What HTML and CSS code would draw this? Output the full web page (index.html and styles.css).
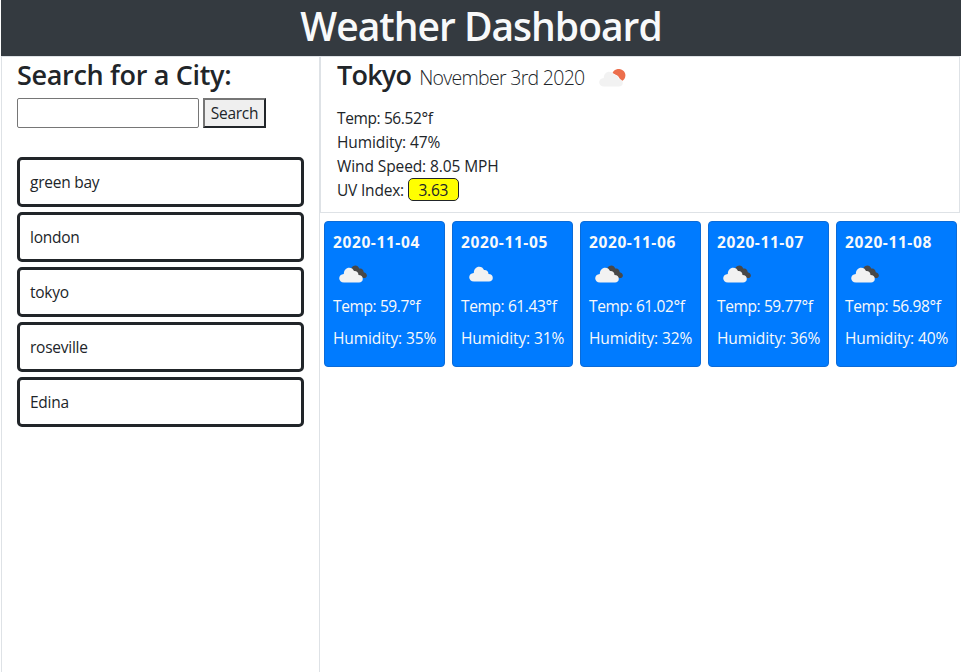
FILE: index.html
```html
<!DOCTYPE html>
<html lang="en">
<head>
<meta charset="utf-8">
<title>Weather Dashboard</title>
<link rel="stylesheet" href="styles.css">
</head>
<body>
<svg class="defs" width="0" height="0" aria-hidden="true">
  <symbol id="cloud" viewBox="0 0 24 16">
    <path d="M5 15.5C2 15.5 .2 13.400 .2 11.200C.2 8.800 2 7.100 4.800 6.900C5 3 7.100.7 10.200.7C12.500.7 14.200 1.900 15 4C17.300 3.700 19.500 5.300 19.500 8C22.200 8 23.800 9.600 23.800 11.900C23.800 14 22.200 15.500 20 15.500Z"/>
  </symbol>
  <symbol id="broken" viewBox="0 0 28 18">
    <path fill="#484848" d="M12 3.500C14-.3 19-.5 20.200 3.600C23 3 24.700 5 24.700 7.200C27 7.700 28.200 9.500 27.800 11.200C27.400 12.600 25.800 13.200 24 13L14 8Z"/>
    <use href="#cloud" x="0" y="2" width="24" height="16" fill="#f2f2f2"/>
  </symbol>
  <symbol id="suncloud" viewBox="0 0 28 18">
    <path fill="#ec6e4c" d="M13.500 4C15-.2 20.500-1.300 24 1.500C28 4.800 26.700 10.500 22.500 12.300L19 7Z"/>
    <use href="#cloud" x="0" y="2" width="24" height="16" fill="#f2f2f2"/>
  </symbol>
</svg>
<header class="header"><h1>Weather Dashboard</h1></header>
<main class="main">
  <aside class="sidebar">
    <h3 class="search-title">Search for a City:</h3>
    <form class="search"><input type="text" aria-label="City"><button type="button">Search</button></form>
    <ul class="cities">
      <li>green bay</li>
      <li>london</li>
      <li>tokyo</li>
      <li>roseville</li>
      <li>Edina</li>
    </ul>
  </aside>
  <section class="content">
    <div class="current">
      <div class="heading"><h3 class="city">Tokyo</h3><span class="date">November 3rd 2020</span><svg class="icon" width="28" height="18"><use href="#suncloud"/></svg></div>
      <p class="temp">Temp: 56.52°f</p>
      <p>Humidity: 47%</p>
      <p>Wind Speed: 8.05 MPH</p>
      <p class="uv">UV Index: <span class="badge">3.63</span></p>
    </div>
    <div class="forecast">
      <div class="card"><h5>2020-11-04</h5><svg width="28" height="18"><use href="#broken"/></svg><p class="temp">Temp: 59.7°f</p><p>Humidity: 35%</p></div>
      <div class="card"><h5>2020-11-05</h5><svg class="single" width="24" height="16"><use href="#cloud" fill="#f2f2f2"/></svg><p class="temp">Temp: 61.43°f</p><p>Humidity: 31%</p></div>
      <div class="card"><h5>2020-11-06</h5><svg width="28" height="18"><use href="#broken"/></svg><p class="temp">Temp: 61.02°f</p><p>Humidity: 32%</p></div>
      <div class="card"><h5>2020-11-07</h5><svg width="28" height="18"><use href="#broken"/></svg><p class="temp">Temp: 59.77°f</p><p>Humidity: 36%</p></div>
      <div class="card"><h5>2020-11-08</h5><svg width="28" height="18"><use href="#broken"/></svg><p class="temp">Temp: 56.98°f</p><p>Humidity: 40%</p></div>
    </div>
  </section>
</main>
</body>
</html>
```
FILE: styles.css
```css
* { box-sizing: border-box; }
body {
  margin: 0 1px;
  height: 672px;
  overflow: hidden;
  display: flex;
  flex-direction: column;
  background: #fff;
  color: #212529;
  font: 400 15.5px/24px "Open Sans", "Noto Sans", sans-serif;
  letter-spacing: -0.25px;
}
h1, h3, h5, p, ul { margin: 0; padding: 0; }
.defs { position: absolute; }
.header {
  height: 56px;
  flex: none;
  background: #343a40;
  color: #f8f9fa;
  text-align: center;
}
h1 { font-size: 39px; line-height: 52px; font-weight: 600; letter-spacing: -1px; }
.main { flex: 1; display: flex; }
.sidebar {
  width: 319px;
  flex: none;
  border: 1px solid #dee2e6;
  border-bottom: 0;
  padding: 1px 15px 0;
}
h3 { font-size: 27px; line-height: 34px; font-weight: 600; letter-spacing: -0.32px; }
.city { letter-spacing: -0.8px; }
.search { display: flex; gap: 4px; margin-top: 6px; }
.search input {
  width: 182px;
  height: 30px;
  border: 1px solid #767676;
  border-radius: 2px;
}
.search button {
  width: 63px;
  height: 30px;
  padding: 0;
  border: 2px solid;
  border-color: #767676 #212529 #212529 #767676;
  background: #efefef;
  color: #212529;
  font: inherit;
  letter-spacing: inherit;
}
.cities { list-style: none; display: grid; gap: 5px; margin-top: 29px; }
.cities li {
  height: 50px;
  padding: 10px;
  border: 3px solid #212529;
  border-radius: 5px;
}
.content { flex: 1; }
.current {
  height: 157px;
  margin-right: 1px;
  border: 1px solid #dee2e6;
  padding: 1px 16px 0;
}
.current p, .card p { letter-spacing: -0.1px; }
.current .temp, .card .temp { letter-spacing: -0.38px; }
.current .uv { letter-spacing: -0.2px; }
.heading { display: flex; align-items: baseline; height: 48px; }
.date { margin-left: 8px; font-size: 19.5px; font-weight: 300; letter-spacing: -0.7px; }
.icon { align-self: flex-start; margin: 11px 0 0 14px; }
.badge {
  display: inline-block;
  width: 51px;
  height: 23px;
  line-height: 22px;
  border: 1px solid #212529;
  border-radius: 5px;
  background: #ff0;
  text-align: center;
}
.forecast { display: flex; gap: 7px; padding: 8px 4px; }
.card {
  width: 121px;
  height: 146px;
  padding: 8px 8px 0;
  border: 1px solid #0b6bd8;
  border-radius: 4px;
  background: #007bff;
  color: #f8f9fa;
  white-space: nowrap;
}
.card h5 { font-size: 15.5px; line-height: 24px; font-weight: 700; letter-spacing: 0.6px; }
.card svg { display: block; margin: 11px 0 11px 6px; }
.card .single { margin: 12px 0 12px 8px; }
.card p + p { margin-top: 8px; }
```
